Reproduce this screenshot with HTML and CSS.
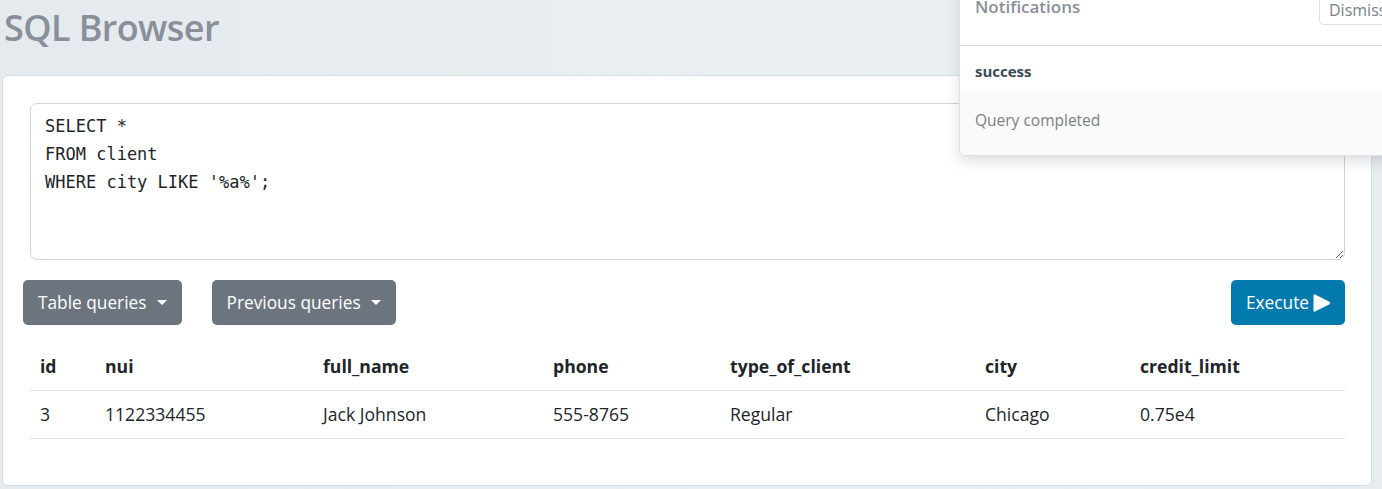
FILE: index.html
```html
<!DOCTYPE html>
<html lang="en">
<head>
<meta charset="utf-8">
<title>SQL Browser</title>
<link rel="stylesheet" href="styles.css">
</head>
<body>
<div class="page">
  <h1 class="title">SQL Browser</h1>
  <div class="card">
    <textarea class="editor" spellcheck="false">SELECT *
FROM client
WHERE city LIKE '%a%';</textarea>
    <div class="toolbar">
      <div class="toolbar-left">
        <button class="btn btn-grey">Table queries <span class="caret"></span></button>
        <button class="btn btn-grey">Previous queries <span class="caret"></span></button>
      </div>
      <button class="btn btn-blue">Execute <svg class="play" width="18" height="20" viewBox="0 0 18 20"><path d="M2 1.5 Q0.5 0.8 0.5 2.5 V17.5 Q0.5 19.2 2 18.5 L16.5 11.2 Q18 10 16.5 8.8 Z" fill="#fff"/></svg></button>
    </div>
    <table class="results">
      <colgroup>
        <col class="c-id"><col class="c-nui"><col class="c-name"><col class="c-phone"><col class="c-type"><col class="c-city"><col class="c-credit">
      </colgroup>
      <thead>
        <tr><th>id</th><th>nui</th><th>full_name</th><th>phone</th><th>type_of_client</th><th>city</th><th>credit_limit</th></tr>
      </thead>
      <tbody>
        <tr><td>3</td><td>1122334455</td><td>Jack Johnson</td><td>555-8765</td><td>Regular</td><td>Chicago</td><td>0.75e4</td></tr>
      </tbody>
    </table>
  </div>
</div>
<div class="notify">
  <div class="notify-head">
    <span class="notify-title">Notifications</span>
    <button class="dismiss">Dismiss</button>
  </div>
  <div class="notify-item">
    <div class="notify-kind">success</div>
    <div class="notify-msg">Query completed</div>
  </div>
</div>
</body>
</html>
```
FILE: styles.css
```css
* { box-sizing: border-box; }
html, body { margin: 0; height: 100%; }
body {
  font-family: "Open Sans", "Liberation Sans", sans-serif;
  color: #212529;
  background:
    linear-gradient(90deg, rgba(255,255,255,0) 0%, rgba(255,255,255,0.25) 60%, rgba(255,255,255,0.1) 100%),
    #e4eaee;
  overflow: hidden;
}
.page {
  padding: 0 10px 0 2px;
}
.title {
  margin: 0;
  height: 75px;
  padding: 6px 0 0 2px;
  font-size: 36px;
  line-height: 44px;
  font-weight: 600;
  color: #8a8f99;
  letter-spacing: -0.6px;
}
.card {
  background: #fff;
  border: 1px solid #d3dee7;
  border-radius: 6px;
  padding: 27px 26px 46px 27px;
  height: 411px;
}
.editor {
  display: block;
  width: 100%;
  height: 157px;
  border: 1px solid #ced4da;
  border-radius: 7px;
  padding: 8px 14px 6px;
  font-family: "DejaVu Sans Mono", "Liberation Mono", monospace;
  font-size: 17px;
  line-height: 28px;
  color: #212529;
  resize: vertical;
  outline: none;
}
.toolbar {
  display: flex;
  justify-content: space-between;
  align-items: center;
  margin: 20px 0 17px -7px;
}
.toolbar-left { display: flex; gap: 30px; }
.btn {
  height: 45px;
  border: none;
  border-radius: 5px;
  padding: 0 15px 0 15px;
  font-family: "Open Sans", "Liberation Sans", sans-serif;
  font-size: 17.3px;
  color: #fff;
  display: inline-flex;
  align-items: center;
  cursor: pointer;
}
.btn-grey { background: #6c757d; }
.btn-blue { background: #037aad; padding: 0 14px 0 15px; }
.caret {
  display: inline-block;
  width: 0; height: 0;
  margin-left: 10px;
  border-left: 5px solid transparent;
  border-right: 5px solid transparent;
  border-top: 5px solid #fff;
}
.play { margin-left: 4px; }
.results {
  width: 100%;
  border-collapse: collapse;
  table-layout: fixed;
  font-size: 17.6px;
  margin-top: 0;
}
.c-id { width: 65px; }
.c-nui { width: 218px; }
.c-name { width: 230px; }
.c-phone { width: 177px; }
.c-type { width: 255px; }
.c-city { width: 155px; }
.c-credit { width: 215px; }
.results th, .results td {
  text-align: left;
  padding: 12px 10px 12px 10px;
  line-height: 23px;
  border-bottom: 1px solid #dee2e6;
}
.results th { font-weight: 700; padding-top: 13px; }
.results td { font-weight: 400; }

.notify {
  position: absolute;
  top: -20px;
  left: 959px;
  width: 450px;
  background: #fff;
  border: 1px solid #dde2e6;
  border-radius: 6px;
  box-shadow: 0 6px 14px rgba(0,0,0,0.12);
}
.notify-head {
  display: flex;
  align-items: center;
  justify-content: space-between;
  height: 65px;
  padding: 0 0 0 15px;
  border-bottom: 1px solid #d8dde2;
}
.notify-title {
  font-size: 17px;
  font-weight: 600;
  color: #8a8f99;
  margin-top: -14px;
}
.dismiss {
  margin-top: -14px;
  margin-right: 17px;
  width: 72px;
  height: 38px;
  background: #fff;
  border: 1px solid #dde2e6;
  border-radius: 5px;
  font-family: "Open Sans", "Liberation Sans", sans-serif;
  font-size: 16px;
  color: #7a818a;
  text-align: left;
  padding: 8px 0 0 9px;
  white-space: nowrap;
}
.notify-kind {
  height: 46px;
  padding: 4px 15px 0;
  display: flex;
  align-items: center;
  font-size: 15px;
  font-weight: 700;
  color: #3d4a56;
  background: #fff;
}
.notify-msg {
  height: 63px;
  padding: 16px 15px 0;
  line-height: 24px;
  font-size: 15.5px;
  color: #7b8087;
  background: #fafafa;
  border-radius: 0 0 6px 6px;
}
```
